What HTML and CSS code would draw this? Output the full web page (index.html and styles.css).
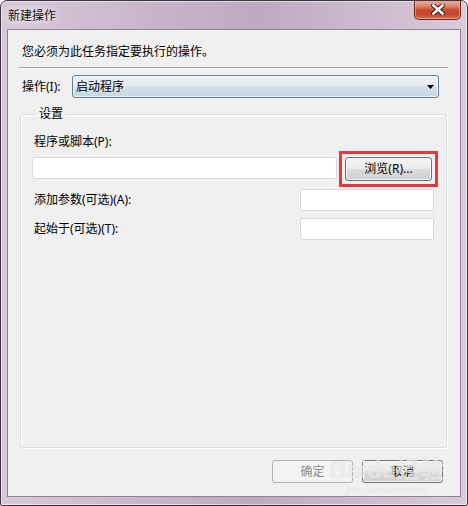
FILE: index.html
```html
<!DOCTYPE html>
<html lang="zh-CN">
<head>
<meta charset="utf-8">
<title>新建操作</title>
<link rel="stylesheet" href="styles.css">
</head>
<body>
<div class="window">
  <div class="titlebar">
    <span class="title">新建操作</span>
    <button class="close" aria-label="关闭">
      <svg width="14" height="11" viewBox="0 0 14 11">
        <path d="M2.5 1.5 L11.5 9.5 M11.5 1.5 L2.5 9.5" stroke="#3a1a14" stroke-width="4.6" stroke-linecap="square" fill="none"/>
        <path d="M2.5 1.5 L11.5 9.5 M11.5 1.5 L2.5 9.5" stroke="#ffffff" stroke-width="2.6" stroke-linecap="square" fill="none"/>
      </svg>
    </button>
  </div>
  <div class="client">
    <div class="instr">您必须为此任务指定要执行的操作。</div>
    <div class="sep"></div>
    <div class="action-row">
      <span class="lbl">操作(I):</span>
      <div class="combo">
        <span>启动程序</span>
        <svg class="arrow" width="7" height="4" viewBox="0 0 7 4"><path d="M0 0 H7 L3.5 4 Z" fill="#000"/></svg>
      </div>
    </div>
    <fieldset class="group">
      <legend>设置</legend>
      <div class="field-label">程序或脚本(P):</div>
      <div class="prog-row">
        <div class="input prog"></div>
        <span class="mark"><button class="btn browse">浏览(R)...</button></span>
      </div>
      <div class="opt-row first">
        <span class="field-label">添加参数(可选)(A):</span>
        <div class="input opt"></div>
      </div>
      <div class="opt-row">
        <span class="field-label">起始于(可选)(T):</span>
        <div class="input opt"></div>
      </div>
    </fieldset>
    <div class="buttons">
      <button class="btn disabled">确定</button>
      <button class="btn">取消</button>
    </div>
    <div class="watermark">
      <span class="wm-big">Bai<span class="paw">du</span>经验</span>
      <span class="wm-small">jingyan.baidu.com</span>
    </div>
  </div>
</div>
</body>
</html>
```

FILE: styles.css
```css
* { box-sizing: border-box; }
html, body {
  margin: 0;
  padding: 0;
  width: 468px;
  height: 506px;
  background: #ffffff;
  overflow: hidden;
}
body {
  font-family: "Noto Sans", "Noto Sans CJK SC", sans-serif;
  font-size: 12px;
  color: #000;
}
.window {
  width: 468px;
  height: 506px;
  display: flex;
  flex-direction: column;
  border: 1px solid #3c3540;
  border-radius: 7px 7px 2px 2px;
  background: linear-gradient(90deg, #d8c9d9 0%, #c9b6cb 30%, #bea9c2 55%, #cdbccf 80%, #d9cbdb 100%);
  box-shadow: inset 0 0 0 1px rgba(255,255,255,0.55);
  position: relative;
  overflow: hidden;
}
.titlebar {
  height: 28px;
  flex: none;
  display: flex;
  align-items: flex-start;
  justify-content: space-between;
  padding-left: 7px;
  padding-right: 6px;
}
.title {
  margin-top: 6px;
  line-height: 16px;
  font-size: 12px;
  color: #111;
  text-shadow: 0 0 6px rgba(255,255,255,0.9), 0 0 10px rgba(255,255,255,0.8);
  font-family: "Noto Sans CJK SC", sans-serif;
}
.close {
  width: 47px;
  height: 20px;
  margin-top: -1px;
  padding: 0;
  border: 1px solid #6b2418;
  border-top: none;
  border-radius: 0 0 5px 5px;
  background: linear-gradient(180deg, #eab2a2 0%, #de8a73 30%, #c6452b 55%, #c84b30 80%, #d97456 100%);
  box-shadow: inset 0 0 0 1px rgba(255,220,200,0.45);
  display: flex;
  align-items: center;
  justify-content: center;
}
.client {
  flex: 1;
  margin: 0 6px 8px 6px;
  border: 1px solid #8f8392;
  background: #f0f0f0;
  display: flex;
  flex-direction: column;
  padding: 13px 12px 13px 12px;
  position: relative;
}
.instr {
  height: 18px;
  line-height: 18px;
  padding-left: 2px;
}
.sep {
  margin-top: 6px;
  margin-left: -1px;
  margin-right: 0;
  border-top: 1px solid #a0a0a0;
  border-bottom: 1px solid #ffffff;
}
.action-row {
  margin-top: 6px;
  display: flex;
  align-items: center;
  height: 23px;
}
.lbl {
  width: 52px;
  padding-left: 2px;
  line-height: 16px;
}
.combo {
  width: 367px;
  height: 23px;
  border: 1px solid #5f7d93;
  border-radius: 3px;
  background: linear-gradient(180deg, #eef3f6 0%, #e5ecf1 48%, #d3dfe7 52%, #c9d8e2 100%);
  box-shadow: inset 0 0 0 1px rgba(255,255,255,0.6);
  display: flex;
  align-items: center;
  justify-content: space-between;
  padding: 0 4px 0 3px;
  line-height: 16px;
}
.group {
  flex: 1;
  margin: 8px 0 0 0;
  padding: 12px 10px 0 11px;
  width: 427px;
  border: 1px solid #d5dfe5;
  border-radius: 3px;
  box-shadow: inset 1px 1px 0 #ffffff, 1px 1px 0 #ffffff;
  min-inline-size: 0;
}
.group legend {
  padding: 0 2px;
  margin-left: 5px;
  line-height: 16px;
  height: 16px;
}
.field-label {
  padding-left: 2px;
  line-height: 16px;
  display: block;
}
.prog-row {
  margin-top: 7px;
  display: flex;
  align-items: flex-start;
}
.input {
  background: #ffffff;
  border: 1px solid #d6d9de;
  border-radius: 2px;
  height: 22px;
}
.input.prog { width: 305px; }
.mark {
  display: inline-flex;
  margin-left: 8px;
  outline: 3px solid #ee3636;
  outline-offset: 3px;
}
.btn {
  font-family: "Noto Sans", "Noto Sans CJK SC", sans-serif;
  font-size: 12px;
  color: #000;
  height: 23px;
  width: 81px;
  padding: 0;
  border: 1px solid #707070;
  border-radius: 3px;
  background: linear-gradient(180deg, #f3f3f3 0%, #ebebeb 48%, #dddddd 52%, #cfcfcf 100%);
  box-shadow: inset 0 0 0 1px rgba(255,255,255,0.75);
  line-height: 16px;
}
.btn.browse {
  width: 87px;
  height: 24px;
}
.btn.disabled {
  color: #8a8a8a;
  border-color: #adb2b5;
  background: #f4f4f4;
  box-shadow: none;
}
.opt-row {
  display: flex;
  align-items: center;
  justify-content: space-between;
  height: 22px;
  margin-right: 2px;
}
.opt-row.first { margin-top: 8px; }
.opt-row + .opt-row { margin-top: 7px; }
.input.opt { width: 134px; }
.buttons {
  margin-top: 12px;
  display: flex;
  justify-content: flex-end;
  gap: 9px;
  padding-right: 5px;
}
.watermark {
  position: absolute;
  right: 16px;
  bottom: 1px;
  display: flex;
  flex-direction: column;
  align-items: center;
  pointer-events: none;
  color: rgba(255,255,255,0.55);
  text-shadow: 0 0 1px rgba(160,160,160,0.35);
}
.wm-big {
  font-family: "Liberation Sans", "Noto Sans CJK SC", sans-serif;
  font-size: 24px;
  font-weight: bold;
  line-height: 26px;
}
.wm-small {
  font-family: "Liberation Serif", serif;
  font-size: 11px;
  line-height: 12px;
}
```
